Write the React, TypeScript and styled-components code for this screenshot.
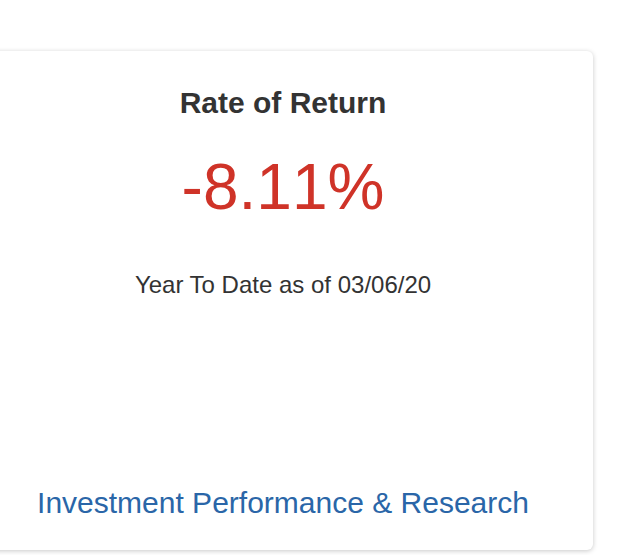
import * as React from 'react'
import styled, { createGlobalStyle } from 'styled-components'

const GlobalStyle = createGlobalStyle`
  html, body {
    margin: 0;
    padding: 0;
    background: #fff;
    font-family: "Liberation Sans", Arial, sans-serif;
  }
`

const Page = styled.div`
  width: 619px;
  height: 555px;
  padding-top: 51px;
  box-sizing: border-box;
  overflow: hidden;
`

const Card = styled.div`
  margin-left: -27px;
  width: 620px;
  height: 499px;
  box-sizing: border-box;
  padding: 34px 0 29px;
  background: #fff;
  border-radius: 6px;
  box-shadow: 0 1px 5px rgba(0, 0, 0, 0.22);
  display: flex;
  flex-direction: column;
  align-items: center;
`

const Title = styled.h2`
  margin: 0;
  font-size: 30px;
  line-height: 36px;
  font-weight: 700;
  color: #333;
`

const Value = styled.div<{ $negative?: boolean }>`
  margin-top: 28px;
  font-size: 64px;
  line-height: 76px;
  font-kerning: none;
  color: ${p => (p.$negative ? '#cf3328' : '#2e7d32')};
`

const Caption = styled.p`
  margin: 46px 0 0;
  font-size: 24px;
  line-height: 28px;
  color: #333;
`

const Link = styled.a`
  margin-top: auto;
  font-size: 30px;
  line-height: 36px;
  color: #2a66a8;
  text-decoration: none;
  cursor: pointer;
`

const App: React.FC = () => (
  <Page>
    <GlobalStyle />
    <Card>
      <Title>Rate of Return</Title>
      <Value $negative>-8.11%</Value>
      <Caption>Year To Date as of 03/06/20</Caption>
      <Link href="#">Investment Performance &amp; Research</Link>
    </Card>
  </Page>
)

export default App
